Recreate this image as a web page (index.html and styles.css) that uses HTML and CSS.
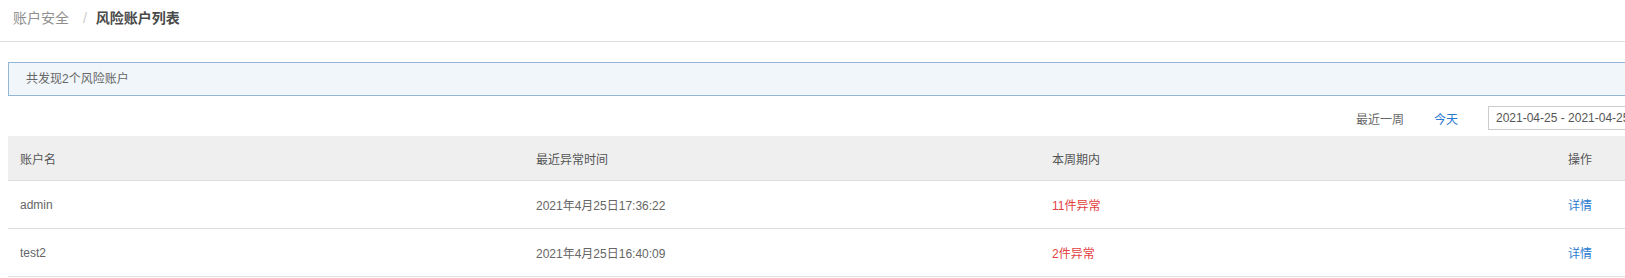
FILE: index.html
```html
<!DOCTYPE html>
<html>
<head>
    <meta charset="utf-8">
    <title>风险账户列表</title>
    <link rel="stylesheet" href="styles.css">
</head>
<body>
    <div class="breadcrumb">
        <span class="crumb">账户安全</span>
        <span class="sep">/</span>
        <span class="crumb current">风险账户列表</span>
    </div>

    <div class="content">
        <div class="alert">共发现2个风险账户</div>

        <div class="toolbar">
            <a class="range">最近一周</a>
            <a class="range active">今天</a>
            <input class="date-input" type="text" value="2021-04-25 - 2021-04-25" readonly>
        </div>

        <table>
            <tr>
                <th>账户名</th>
                <th>最近异常时间</th>
                <th>本周期内</th>
                <th>操作</th>
            </tr>
            <tr>
                <td>admin</td>
                <td>2021年4月25日17:36:22</td>
                <td class="danger">11件异常</td>
                <td><a class="link">详情</a></td>
            </tr>
            <tr>
                <td>test2</td>
                <td>2021年4月25日16:40:09</td>
                <td class="danger">2件异常</td>
                <td><a class="link">详情</a></td>
            </tr>
        </table>
    </div>
</body>
</html>
```

FILE: styles.css
```css
html {
    overflow: hidden;
}

body {
    font-family: "Liberation Sans", Arial, "Noto Sans CJK SC", sans-serif;
    background-color: #fff;
    color: #666;
    margin: 0;
}

.breadcrumb {
    height: 41px;
    line-height: 37px;
    padding: 0 13px;
    border-bottom: 1px solid #dedede;
    font-size: 14px;
    white-space: nowrap;
}

.crumb {
    color: #8f8f8f;
}

.crumb.current {
    color: #4a4a4a;
    font-weight: bold;
}

.sep {
    color: #ccc;
    margin: 0 5px 0 10px;
}

.content {
    width: 2064px;
    padding: 0 8px;
}

.alert {
    margin-top: 20px;
    height: 32px;
    line-height: 32px;
    padding: 0 17px;
    border: 1px solid #94b6d6;
    background-color: #f1f6fb;
    font-size: 12px;
    color: #666;
}

.toolbar {
    display: flex;
    justify-content: flex-end;
    align-items: center;
    gap: 30px;
    margin-top: 10px;
    margin-bottom: 6px;
    font-size: 12px;
}

.range {
    color: #666;
    cursor: pointer;
}

.range.active {
    color: #2b7bcf;
}

.date-input {
    width: 584px;
    height: 24px;
    box-sizing: border-box;
    padding: 0 7px;
    border: 1px solid #ccc;
    font-family: inherit;
    font-size: 12px;
    color: #555;
    outline: none;
}

table {
    width: 100%;
    table-layout: fixed;
    border-collapse: collapse;
    font-size: 12px;
}

th, td {
    text-align: left;
    padding: 0 12px;
    border-bottom: 1px solid #ddd;
}

th {
    height: 44px;
    background-color: #efefef;
    font-weight: normal;
    color: #555;
}

td {
    height: 47px;
    color: #666;
}

td.danger {
    color: #e2403f;
}

.link {
    color: #2b7bcf;
    cursor: pointer;
}
```
